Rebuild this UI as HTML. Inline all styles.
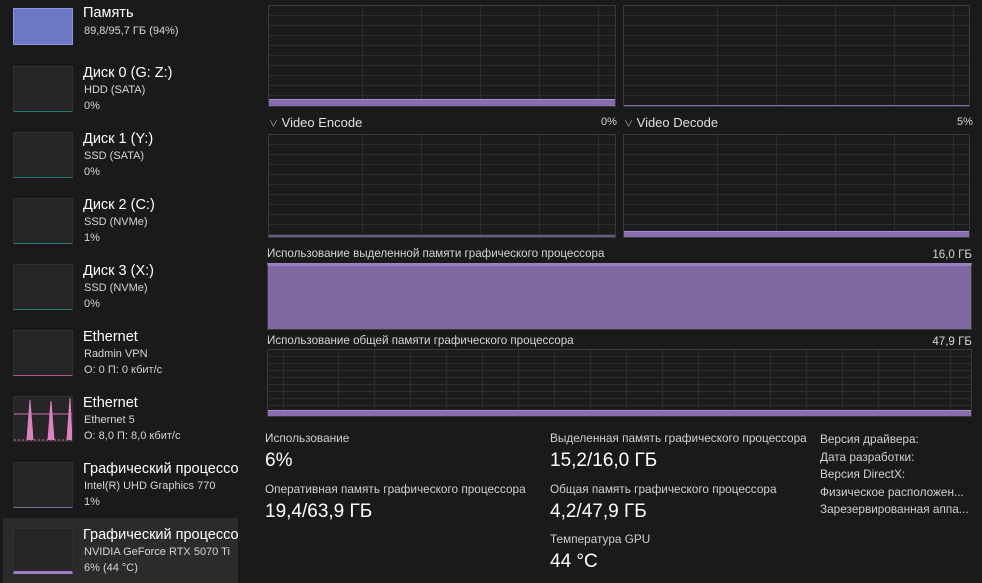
<!DOCTYPE html>
<html><head><meta charset="utf-8"><style>
*{margin:0;padding:0;box-sizing:border-box}
body{width:982px;height:583px;background:#1a1a1a;overflow:hidden;position:relative;font-family:"Liberation Sans","Noto Sans CJK SC",sans-serif;color:#fff}
.a{position:absolute;white-space:nowrap}
.th{position:absolute;left:13px;width:60px;height:46px;background:#262626;border:1px solid #303030}
.t{position:absolute;left:83px;font-size:14.5px;color:#fff;white-space:nowrap}
.s{position:absolute;left:84px;font-size:11px;color:#d6d6d6;line-height:16px;white-space:nowrap}
.g{position:absolute;border:1px solid #3a3a3a;background-color:#1c1c1c;
background-image:repeating-linear-gradient(to bottom,transparent 0 9px,#2e2e2e 9px 10px),repeating-linear-gradient(to right,transparent 0 58px,#2e2e2e 58px 59px);background-position:0 0,35px 0;overflow:hidden}
.f{position:absolute;left:0;right:0;bottom:0;background:#8a6cb0;border-top:1px solid #a88bd0}
.lb{font-size:11.6px;color:#d6d6d6}
.sl{font-size:11.8px;color:#d0d0d0}
.sv{font-size:19px;color:#fff}
</style></head><body>
<div class="a" style="left:3px;top:518px;width:235px;height:65px;background:#2b2b2b"></div>
<div style="position:absolute;left:0;top:0;width:238px;height:583px;overflow:hidden">
<div class="th" style="top:8px;height:37px;background:#6c78c4;border:1px solid #8a96e0"></div>
<div class="t" style="top:5px">Память</div>
<div class="s" style="top:23px">89,8/95,7 ГБ (94%)</div>

<div class="th" style="top:66px;border-bottom:1px solid #1f7a73"></div>
<div class="t" style="top:65px">Диск 0 (G: Z:)</div>
<div class="s" style="top:82px">HDD (SATA)<br>0%</div>

<div class="th" style="top:132px;border-bottom:1px solid #1f7a73"></div>
<div class="t" style="top:131px">Диск 1 (Y:)</div>
<div class="s" style="top:148px">SSD (SATA)<br>0%</div>

<div class="th" style="top:198px;border-bottom:1px solid #1f7a73"></div>
<div class="t" style="top:197px">Диск 2 (C:)</div>
<div class="s" style="top:214px">SSD (NVMe)<br>1%</div>

<div class="th" style="top:264px;border-bottom:1px solid #1f7a73"></div>
<div class="t" style="top:263px">Диск 3 (X:)</div>
<div class="s" style="top:280px">SSD (NVMe)<br>0%</div>

<div class="th" style="top:330px;border-bottom:1px solid #b0558f"></div>
<div class="t" style="top:329px">Ethernet</div>
<div class="s" style="top:346px">Radmin VPN<br>O: 0 П: 0 кбит/с</div>

<div class="th" style="top:396px"><svg width="58" height="44" style="position:absolute;left:0;top:0"><line x1="0" y1="17" x2="58" y2="17" stroke="#d070b0" stroke-width="1"/><path d="M13 43 L16 3 L19 43 M34 43 L37 4 L40 43 M53 43 L56 1 L58 43" fill="#e080c0" stroke="#e080c0"/><line x1="0" y1="43" x2="58" y2="43" stroke="#d070b0" stroke-dasharray="2 2"/></svg></div>
<div class="t" style="top:395px">Ethernet</div>
<div class="s" style="top:412px">Ethernet 5<br>O: 8,0 П: 8,0 кбит/с</div>

<div class="th" style="top:462px;border-bottom:1px solid #7a6a9a"></div>
<div class="t" style="top:461px">Графический процессор 0</div>
<div class="s" style="top:478px">Intel(R) UHD Graphics 770<br>1%</div>

<div class="th" style="top:528px;border-bottom:3px solid #9a7ac0"></div>
<div class="t" style="top:527px">Графический процессор 1</div>
<div class="s" style="top:544px">NVIDIA GeForce RTX 5070 Ti<br>6% (44 °C)</div>
</div>

<div class="g" style="left:268px;top:5px;width:348px;height:102px"><div class="f" style="height:7px"></div></div>
<div class="g" style="left:623px;top:5px;width:347px;height:102px"><div class="f" style="height:1px;border:0"></div></div>

<div class="a" style="left:269px;top:115px;font-size:13px;color:#e0e0e0"><span style="font-size:9px;color:#aaa">∨</span> Video Encode</div>
<div class="a" style="left:601px;top:116px;font-size:11px;color:#d6d6d6">0%</div>
<div class="a" style="left:624px;top:115px;font-size:13px;color:#e0e0e0"><span style="font-size:9px;color:#aaa">∨</span> Video Decode</div>
<div class="a" style="left:957px;top:116px;font-size:11px;color:#d6d6d6">5%</div>

<div class="g" style="left:268px;top:134px;width:348px;height:104px"><div class="f" style="height:2px;border:0;background:#6a5a8a"></div></div>
<div class="g" style="left:623px;top:134px;width:347px;height:104px"><div class="f" style="height:6px"></div></div>

<div class="a lb" style="left:267px;top:247px">Использование выделенной памяти графического процессора</div>
<div class="a lb" style="right:10px;top:248px">16,0 ГБ</div>
<div class="a" style="left:267px;top:263px;width:705px;height:67px;border:1px solid #3a3a3a;background:#8067a0;border-top:3px solid #9a80c0"></div>

<div class="a lb" style="left:267px;top:334px">Использование общей памяти графического процессора</div>
<div class="a lb" style="right:10px;top:335px">47,9 ГБ</div>
<div class="g" style="left:267px;top:349px;width:705px;height:68px;background-image:repeating-linear-gradient(to bottom,transparent 0 6px,#2e2e2e 6px 7px),repeating-linear-gradient(to right,transparent 0 35px,#2e2e2e 35px 36px)"><div class="f" style="height:6px"></div></div>

<div class="a sl" style="left:265px;top:431px">Использование</div>
<div class="a sv" style="left:265px;top:450px">6%</div>
<div class="a sl" style="left:265px;top:482px">Оперативная память графического процессора</div>
<div class="a sv" style="left:265px;top:501px">19,4/63,9 ГБ</div>

<div class="a sl" style="left:550px;top:431px">Выделенная память графического процессора</div>
<div class="a sv" style="left:550px;top:450px">15,2/16,0 ГБ</div>
<div class="a sl" style="left:550px;top:482px">Общая память графического процессора</div>
<div class="a sv" style="left:550px;top:501px">4,2/47,9 ГБ</div>
<div class="a sl" style="left:550px;top:532px">Температура GPU</div>
<div class="a sv" style="left:550px;top:551px">44 °C</div>

<div class="a sl" style="left:820px;top:431px;line-height:17.5px">Версия драйвера:<br>Дата разработки:<br>Версия DirectX:<br>Физическое расположен...<br>Зарезервированная аппа...</div>
</body></html>
